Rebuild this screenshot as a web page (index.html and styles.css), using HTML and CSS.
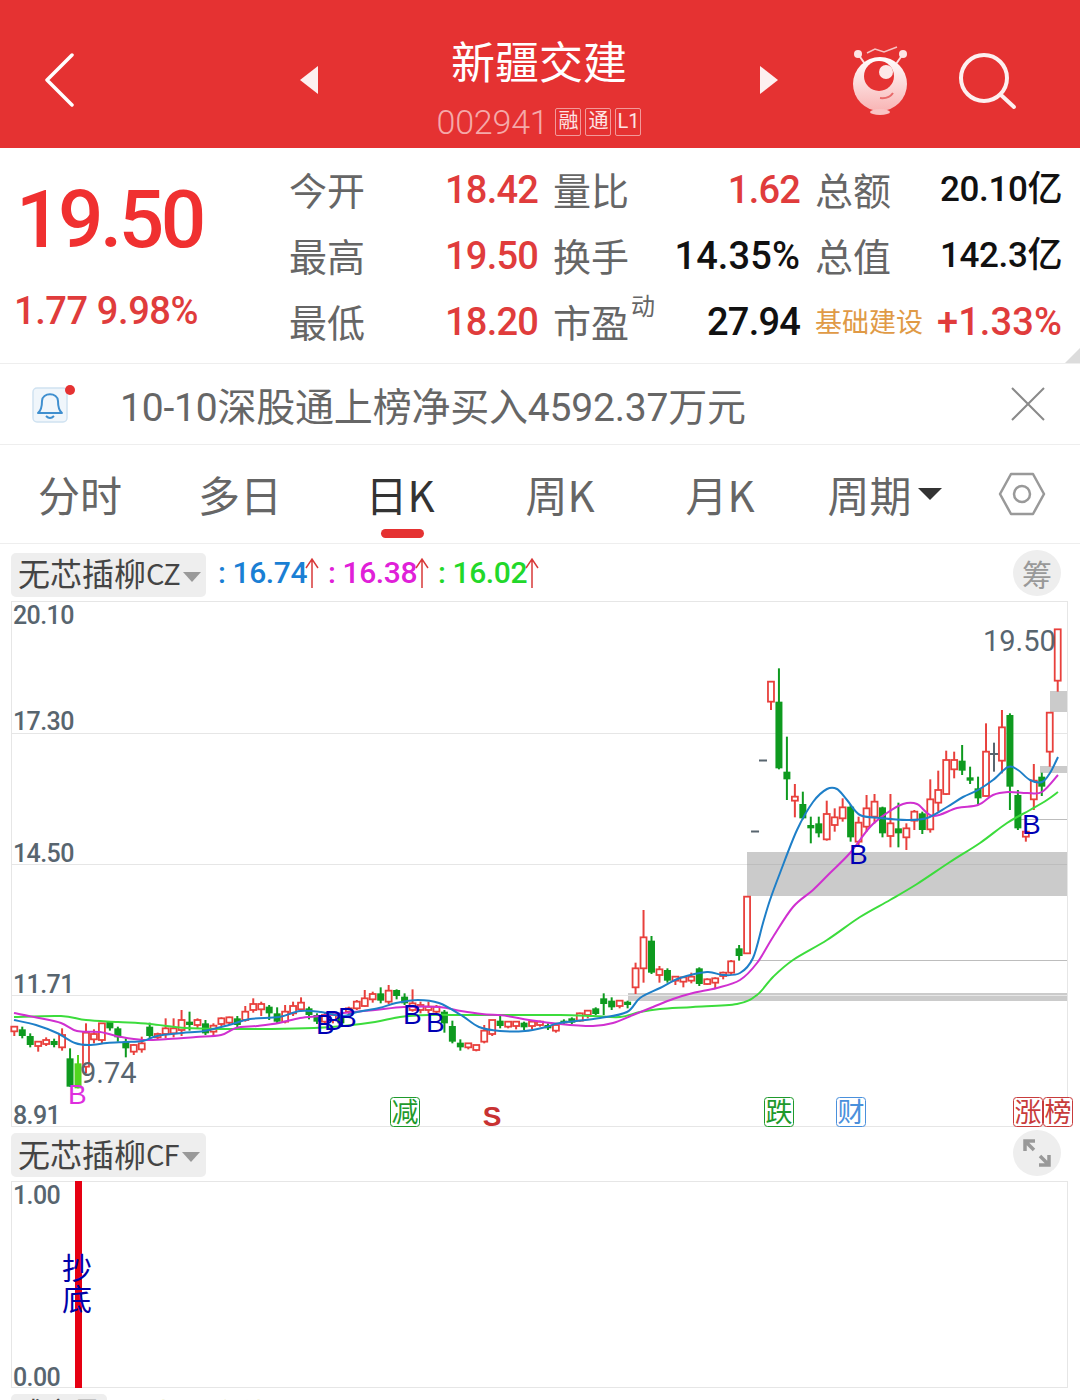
FILE: index.html
```html
<!DOCTYPE html>
<html lang="zh-CN">

<head>
    <meta charset="UTF-8">
    <meta name="viewport" content="width=device-width, initial-scale=1.0">
    <title>新疆交建 002941</title>
    <link rel="stylesheet" href="styles.css">
</head>

<body>

    <header class="nav">
        <svg class="nav-back" width="30" height="54" viewBox="0 0 30 54">
            <path d="M28 2 L3 27 L28 52" fill="none" stroke="#fff" stroke-width="3.5" stroke-linecap="round" stroke-linejoin="round" />
        </svg>
        <span class="nav-arrow nav-arrow-left"></span>
        <div class="nav-title">
            <div class="stock-name">新疆交建</div>
            <div class="stock-code">
                <span class="code-num">002941</span>
                <span class="code-tag">融</span>
                <span class="code-tag">通</span>
                <span class="code-tag">L1</span>
            </div>
        </div>
        <span class="nav-arrow nav-arrow-right"></span>
        <svg class="nav-robot" width="60" height="70" viewBox="849 45 60 70">
            <defs>
                <linearGradient id="robotBody" x1="0" y1="0" x2="0" y2="1">
                    <stop offset="0" stop-color="#fff" />
                    <stop offset="1" stop-color="#f8b4b4" />
                </linearGradient>
            </defs>
            <path d="M866 53 L874 49 L883 52 L896 47" fill="none" stroke="#f7c4c4" stroke-width="1.5" />
            <path d="M857 54 L864 64 M902 54 L895 64" stroke="#fbdcdc" stroke-width="2" />
            <circle cx="857" cy="54" r="4" fill="#fde4e4" />
            <circle cx="902" cy="54" r="4" fill="#fde4e4" />
            <circle cx="879" cy="84" r="27" fill="url(#robotBody)" />
            <circle cx="878" cy="76" r="15" fill="#e53232" />
            <circle cx="885" cy="72" r="7" fill="#fde8e8" />
            <path d="M879 98 Q888 99 892 93" fill="none" stroke="#e86a6a" stroke-width="2" />
            <ellipse cx="879" cy="112" rx="10" ry="3" fill="#f9c4c4" />
        </svg>
        <svg class="nav-search" width="60" height="60" viewBox="956 50 60 60">
            <circle cx="983" cy="78" r="23" fill="none" stroke="#fdf0f0" stroke-width="4" />
            <path d="M1000 95 L1013 107" stroke="#fdf0f0" stroke-width="4" stroke-linecap="round" />
        </svg>
    </header>

    <section class="quote">
        <div class="quote-main">
            <div class="price">19.50</div>
            <div class="change">1.77 9.98%</div>
        </div>
        <div class="quote-grid">
            <span class="q-label">今开</span><span class="q-val red">18.42</span>
            <span class="q-label q-gap">量比</span><span class="q-val red">1.62</span>
            <span class="q-label q-gap">总额</span><span class="q-val q-val-unit">20.10亿</span>

            <span class="q-label">最高</span><span class="q-val red">19.50</span>
            <span class="q-label q-gap">换手</span><span class="q-val q-val-pct">14.35%</span>
            <span class="q-label q-gap">总值</span><span class="q-val q-val-unit">142.3亿</span>

            <span class="q-label">最低</span><span class="q-val red">18.20</span>
            <span class="q-label q-gap">市盈<sup class="q-sup">动</sup></span><span class="q-val">27.94</span>
            <span class="q-label q-gap q-sector">基础建设</span><span class="q-val q-val-pct red">+1.33%</span>
        </div>
        <span class="quote-corner"></span>
    </section>

    <section class="notice">
        <svg class="notice-bell" width="46" height="44" viewBox="30 380 46 44">
            <rect x="33" y="386" width="34" height="34" rx="4" fill="#f0f6fb" stroke="#cfe2f1" stroke-width="1.5" />
            <path d="M38 411 C42 408 42 403 42 399 C42 390 58 390 58 399 C58 403 58 408 62 411 Z" fill="none" stroke="#3f8fcf" stroke-width="2" stroke-linejoin="round" />
            <path d="M46 414 Q50 418 54 414" fill="none" stroke="#3f8fcf" stroke-width="2" />
            <circle cx="70" cy="388" r="5" fill="#e53232" />
        </svg>
        <span class="notice-text">10-10深股通上榜净买入4592.37万元</span>
        <svg class="notice-close" width="36" height="36" viewBox="0 0 36 36">
            <path d="M2 2 L34 34 M34 2 L2 34" stroke="#8a8a8a" stroke-width="2" />
        </svg>
    </section>

    <nav class="tabs">
        <span class="tab">分时</span>
        <span class="tab">多日</span>
        <span class="tab tab-active">日K</span>
        <span class="tab">周K</span>
        <span class="tab">月K</span>
        <span class="tab tab-period">周期<i class="tab-caret"></i></span>
        <svg class="tab-gear" width="48" height="46" viewBox="0 0 48 46">
            <path d="M13 3 H35 L46 23 L35 43 H13 L2 23 Z" fill="none" stroke="#999" stroke-width="2.5" stroke-linejoin="round" />
            <circle cx="24" cy="23" r="8" fill="none" stroke="#999" stroke-width="2.5" />
        </svg>
    </nav>

    <div class="indicator-row">
        <div class="pill">无芯插柳<span class="pill-latin">CZ</span><i class="pill-caret"></i></div>
        <div class="ma-values">
            <span class="ma ma-blue">: 16.74</span>
            <svg class="ma-arrow" width="14" height="32" viewBox="0 0 14 32"><path d="M7 31 V2 M1 11 L7 2 L13 11" fill="none" stroke="#d83a3a" stroke-width="1.5" /></svg>
            <span class="ma ma-pink">: 16.38</span>
            <svg class="ma-arrow" width="14" height="32" viewBox="0 0 14 32"><path d="M7 31 V2 M1 11 L7 2 L13 11" fill="none" stroke="#d83a3a" stroke-width="1.5" /></svg>
            <span class="ma ma-green">: 16.02</span>
            <svg class="ma-arrow" width="14" height="32" viewBox="0 0 14 32"><path d="M7 31 V2 M1 11 L7 2 L13 11" fill="none" stroke="#d83a3a" stroke-width="1.5" /></svg>
        </div>
        <span class="round-btn round-text">筹</span>
    </div>

    <svg class="chart" width="1080" height="527" viewBox="0 601 1080 527">
        <rect class="zone" x="747" y="852" width="320" height="44" />
        <rect class="zone" x="1050" y="691" width="17" height="21" />
        <rect class="zone" x="1040" y="766" width="27" height="7" />
        <rect class="zone" x="628" y="993" width="439" height="8" />
        <path class="grid" d="M11 733.5 H1067 M11 864.5 H1067 M11 995.5 H1067" />
        <path class="support" d="M750 960.5 H1067 M1020 819.5 H1067 M747 864.5 H1067" />
        <rect class="frame" x="11.5" y="601.5" width="1056" height="525" />

        <g id="candles"></g>
        <g id="maLines"></g>

        <text class="axis" x="13" y="624">20.10</text>
        <text class="axis" x="13" y="730">17.30</text>
        <text class="axis" x="13" y="862">14.50</text>
        <text class="axis" x="13" y="993">11.71</text>
        <text class="axis" x="13" y="1124">8.91</text>

        <text class="peak" x="983" y="651">19.50</text>
        <text class="peak" x="80" y="1083">9.74</text>

        <text class="buy" x="316" y="1034">B</text>
        <text class="buy" x="324" y="1030">B</text>
        <text class="buy" x="338" y="1027">B</text>
        <text class="buy" x="403" y="1024">B</text>
        <text class="buy" x="426" y="1032">B</text>
        <text class="buy" x="849" y="864">B</text>
        <text class="buy" x="1022" y="834">B</text>
        <text class="buy buy-pink" x="68" y="1104">B</text>

        <rect class="tag tag-green" x="390.5" y="1097.5" width="29" height="29" rx="3" />
        <text class="tag-text tag-text-green" x="405" y="1122">减</text>
        <text class="sell" x="492" y="1126">S</text>
        <rect class="tag tag-green" x="764.5" y="1097.5" width="29" height="29" rx="3" />
        <text class="tag-text tag-text-green" x="779" y="1122">跌</text>
        <rect class="tag tag-blue" x="836.5" y="1097.5" width="29" height="29" rx="3" />
        <text class="tag-text tag-text-blue" x="851" y="1122">财</text>
        <rect class="tag tag-red" x="1013.5" y="1097.5" width="29" height="29" rx="3" />
        <text class="tag-text tag-text-red" x="1028" y="1122">涨</text>
        <rect class="tag tag-red" x="1043.5" y="1097.5" width="29" height="29" rx="3" />
        <text class="tag-text tag-text-red" x="1058" y="1122">榜</text>
    </svg>

    <div class="indicator-row indicator-row-sub">
        <div class="pill">无芯插柳<span class="pill-latin">CF</span><i class="pill-caret"></i></div>
        <span class="round-btn round-btn-up">
            <svg width="30" height="30" viewBox="0 0 30 30">
                <path d="M3 13 V3 H13 M3 3 L12 12 M27 17 V27 H17 M27 27 L18 18" fill="none" stroke="#999" stroke-width="3.5" />
            </svg>
        </span>
    </div>

    <svg class="chart-sub" width="1080" height="208" viewBox="0 1181 1080 208">
        <rect class="frame" x="11.5" y="1181.5" width="1056" height="206" />
        <rect x="75" y="1181" width="7" height="207" fill="#e60012" />
        <text class="bottom-tag" x="77" y="1279">抄</text>
        <text class="bottom-tag" x="77" y="1310">底</text>
        <text class="axis" x="13" y="1204">1.00</text>
        <text class="axis" x="13" y="1386">0.00</text>
    </svg>

    <div class="bottom-row">
        <div class="pill pill-small">成交量</div>
        <span class="bottom-note">主力资金线</span>
    </div>

    <script src="chart.js"></script>
</body>

</html>
```

FILE: styles.css
```css
* {
    box-sizing: border-box;
}

html,
body {
    height: 1400px;
    overflow: hidden;
}

body {
    margin: 0;
    background-color: #fff;
    font-family: Roboto, "Noto Sans CJK SC", sans-serif;
    color: #666;
}

svg {
    display: block;
}

/* top bar */
.nav {
    display: flex;
    align-items: center;
    height: 148px;
    padding-left: 44px;
    background-color: #e53232;
    color: #fff;
}

.nav-back {
    margin-top: 12px;
}

.nav-arrow {
    width: 0;
    height: 0;
    margin-top: 12px;
    border-top: 14px solid transparent;
    border-bottom: 14px solid transparent;
}

.nav-arrow-left {
    margin-left: 226px;
    border-right: 18px solid #fdf0f0;
}

.nav-arrow-right {
    border-left: 18px solid #fdf0f0;
}

.nav-title {
    width: 442px;
    text-align: center;
}

.stock-name {
    margin-top: 19px;
    font-size: 44px;
    line-height: 60px;
    font-family: "Noto Sans CJK SC", sans-serif;
}

.stock-code {
    display: flex;
    align-items: center;
    justify-content: center;
    gap: 4px;
    margin-top: 17px;
    height: 30px;
}

.code-num {
    margin-right: 3px;
    font-size: 34px;
    font-weight: 300;
    letter-spacing: -0.2px;
    color: #f5a9a9;
}

.code-tag {
    display: block;
    width: 26px;
    height: 28px;
    border: 1px solid #f29a9a;
    border-radius: 2px;
    font-size: 20px;
    line-height: 25px;
    text-align: center;
    color: #fde4e4;
}

.nav-robot {
    margin-left: 72px;
    margin-top: 12px;
}

.nav-search {
    margin-left: 47px;
    margin-top: 12px;
}

/* quote block */
.quote {
    position: relative;
    display: flex;
    height: 216px;
    border-bottom: 1px solid #eee;
}

.quote-main {
    width: 289px;
    padding-left: 14px;
}

.price {
    margin-top: 22px;
    padding-left: 2px;
    font-size: 80px;
    line-height: 100px;
    font-weight: 500;
    letter-spacing: -3.5px;
    color: #f03030;
}

.change {
    margin-top: 18px;
    font-size: 38px;
    line-height: 46px;
    font-weight: 500;
    letter-spacing: -0.4px;
    color: #e03c3c;
}

.quote-grid {
    display: grid;
    grid-template-columns: 76px 173px 91px 171px 92px 170px;
    grid-auto-rows: 66px;
    align-items: center;
    padding-top: 8px;
}

.q-label {
    font-family: "Noto Sans CJK SC", sans-serif;
    font-size: 38px;
    line-height: 44px;
    white-space: nowrap;
    color: #666;
}

.q-gap {
    padding-left: 15px;
}

.q-sup {
    position: relative;
    top: -22px;
    margin-left: 2px;
    font-size: 24px;
    line-height: 0;
    vertical-align: baseline;
}

.q-sector {
    font-size: 27px;
    color: #e09a46;
}

.q-val {
    padding-top: 1px;
    font-size: 38px;
    line-height: 44px;
    font-weight: 500;
    letter-spacing: -0.8px;
    text-align: right;
    white-space: nowrap;
    color: #111;
}

.q-val-pct {
    letter-spacing: 0.1px;
}

.q-val-unit {
    font-size: 35px;
    letter-spacing: -0.4px;
}

.q-val.red {
    color: #e03c3c;
}

.quote-corner {
    position: absolute;
    right: 0;
    bottom: 0;
    border-left: 15px solid transparent;
    border-bottom: 15px solid #dcdcdc;
}

/* notice */
.notice {
    display: flex;
    align-items: center;
    height: 81px;
    padding-left: 30px;
    border-bottom: 1px solid #eee;
}

.notice-text {
    margin-left: 44px;
    width: 891px;
    font-size: 39px;
    letter-spacing: -0.2px;
    white-space: nowrap;
    color: #666;
}

.notice-close {
    margin-left: -1px;
}

/* period tabs */
.tabs {
    display: grid;
    grid-template-columns: repeat(6, 160px) 120px;
    align-items: center;
    height: 99px;
    border-bottom: 1px solid #eee;
}

.tab {
    position: relative;
    font-family: "Noto Sans CJK SC", sans-serif;
    font-size: 42px;
    line-height: 60px;
    text-align: center;
    color: #666;
}

.tab-active {
    color: #333;
}

.tab-active::after {
    content: "";
    position: absolute;
    left: 61px;
    bottom: -14px;
    width: 43px;
    height: 9px;
    border-radius: 5px;
    background-color: #e53232;
}

.tab-period {
    padding-left: 9px;
}

.tab-caret {
    display: inline-block;
    margin-left: 6px;
    vertical-align: 12px;
    border-left: 12px solid transparent;
    border-right: 12px solid transparent;
    border-top: 12px solid #333;
}

.tab-gear {
    margin-left: 38px;
}

/* indicator rows */
.indicator-row {
    display: flex;
    align-items: center;
    height: 57px;
    padding: 4px 19px 0 11px;
}

.indicator-row-sub {
    height: 53px;
    align-items: flex-start;
    padding-top: 5px;
}

.pill {
    display: flex;
    align-items: center;
    width: 195px;
    height: 44px;
    padding-left: 7px;
    padding-bottom: 5px;
    border-radius: 5px;
    background-color: #eee;
    font-family: "Noto Sans CJK SC", sans-serif;
    font-size: 32px;
    color: #444;
    white-space: nowrap;
}

.pill-latin {
    font-size: 29px;
    letter-spacing: -1px;
}

.pill-caret {
    margin-left: 3px;
    margin-top: 9px;
    border-left: 9px solid transparent;
    border-right: 9px solid transparent;
    border-top: 10px solid #999;
}

.ma-values {
    display: flex;
    align-items: center;
    flex: 1;
    margin-left: 12px;
    margin-top: -4px;
}

.ma {
    width: 87px;
    font-size: 30px;
    font-weight: 500;
    letter-spacing: -0.4px;
    white-space: nowrap;
}

.ma-blue {
    color: #1a7fd4;
}

.ma-pink {
    color: #e020d8;
}

.ma-green {
    color: #22d82a;
}

.ma-arrow {
    margin-right: 9px;
}

.round-btn {
    display: flex;
    align-items: center;
    justify-content: center;
    flex: none;
    width: 48px;
    height: 46px;
    border-radius: 50%;
    background-color: #eee;
}

.round-btn-up {
    margin-top: -3px;
}

.indicator-row-sub .pill {
    margin-right: auto;
}

.round-text {
    margin-top: -4px;
    font-family: "Noto Sans CJK SC", sans-serif;
    font-size: 30px;
    color: #999;
}

/* charts */
.chart,
.chart-sub {
    overflow: visible;
}

.frame {
    fill: none;
    stroke: #e6e6e6;
}

.zone {
    fill: #cbcbcb;
}

.grid {
    fill: none;
    stroke: #e6e6e6;
}

.support {
    fill: none;
    stroke: #bdbdbd;
}

.ma-line {
    fill: none;
    stroke-width: 2;
    stroke-linejoin: round;
}

.axis {
    font-size: 25px;
    font-weight: 500;
    letter-spacing: -0.6px;
    fill: #58656f;
}

.peak {
    font-size: 29px;
    fill: #58656f;
}

.buy {
    font-family: "Liberation Sans", sans-serif;
    font-size: 28px;
    fill: #0000b4;
}

.buy-pink {
    fill: #de2ede;
}

.sell {
    font-family: "Liberation Sans", sans-serif;
    font-size: 28px;
    font-weight: 700;
    text-anchor: middle;
    fill: #c83232;
}

.tag {
    fill: #fff;
}

.tag-green {
    stroke: #1f9a2c;
}

.tag-blue {
    stroke: #4a90dc;
}

.tag-red {
    stroke: #c83c3c;
}

.tag-text {
    font-family: "Noto Sans CJK SC", sans-serif;
    font-size: 27px;
    text-anchor: middle;
}

.tag-text-green {
    fill: #1f9a2c;
}

.tag-text-blue {
    fill: #4a90dc;
}

.tag-text-red {
    fill: #c83c3c;
}

.bottom-tag {
    font-family: "Noto Sans CJK SC", sans-serif;
    font-size: 30px;
    text-anchor: middle;
    fill: #0000a8;
}

.bottom-row {
    display: flex;
    align-items: flex-start;
    gap: 13px;
    margin-top: 5px;
    padding-left: 11px;
}

.pill-small {
    width: 96px;
    padding-left: 6px;
    padding-bottom: 0;
    align-items: flex-start;
    font-size: 28px;
    line-height: 34px;
}

.bottom-note {
    font-family: "Noto Sans CJK SC", sans-serif;
    font-size: 30px;
    line-height: 36px;
    color: #e6da8e;
}
```

FILE: chart.js
```javascript
// candle rows are: type, wick top, body top, body bottom, wick bottom
// r = up (hollow), g = down, l = lime, k = doji
const GROUPS = [
    {
        start: 0, base: 960, rows: [
            'r 200 200 214 228', 'g 200 208 228 235', 'g 220 228 255 262', 'r 245 245 258 275',
            'r 232 240 252 258', 'g 236 243 255 262', 'r 205 225 262 272', 'g 265 295 380 380',
            'l 285 310 385 385', 'r 190 218 320 340', 'r 208 222 238 250', 'r 190 190 240 250',
            'g 183 185 205 212', 'g 200 205 232 245', 'g 235 245 265 292', 'r 252 255 275 285',
            'r 230 250 268 278', 'g 188 200 228 235', 'r 218 222 232 238', 'r 175 205 222 235',
            'r 175 205 220 232', 'r 150 180 210 228', 'g 155 185 195 212', 'r 175 180 195 205',
            'g 180 190 220 225', 'r 190 197 215 228', 'r 172 175 192 198', 'r 170 172 188 195',
            'g 168 175 195 205', 'r 138 155 180 185', 'r 115 132 150 158', 'r 125 132 148 168',
            'g 135 140 160 180', 'g 142 160 185 192', 'r 135 155 185 190', 'r 125 138 160 168',
            'r 112 128 148 155', 'g 140 145 165 178', 'g 160 165 185 192', 'r 158 165 185 195',
            'r 155 165 180 190', 'g 160 170 190 200', 'r 140 145 155 165', 'r 120 125 145 150',
            'r 90 115 138 140', 'r 95 102 118 128', 'g 82 100 122 130', 'r 75 92 125 132',
            'g 88 90 108 118', 'g 100 110 130 135', 'r 88 130 150 155', 'r 125 135 150 160',
            'r 125 140 150 160', 'r 135 140 155 165', 'g 150 155 190 218', 'g 182 198 245 250',
            'g 238 248 262 272', 'r 250 250 262 268', 'r 255 255 270 274', 'r 195 212 245 250',
            'r 180 180 222 228', 'g 168 182 198 205', 'r 185 185 200 205', 'r 185 185 198 208',
            'g 185 188 202 210', 'r 182 185 198 208', 'r 182 185 195 200', 'g 190 195 205 210',
            'r 195 195 212 218'
        ]
    },
    {
        start: 69, base: 880, rows: [
            'g 418 422 430 434', 'g 412 415 428 432', 'r 398 400 422 425', 'r 392 392 405 415',
            'g 382 385 402 405', 'g 340 355 372 405', 'g 352 362 382 390', 'r 362 362 378 385',
            'g 362 365 375 385', 'r 248 265 322 342', 'r 90 172 265 308', 'g 168 182 278 282',
            'r 258 268 285 308', 'g 265 270 302 308', 'r 290 290 302 315', 'r 290 292 305 322',
            'r 278 290 302 310', 'g 262 265 312 318', 'r 295 298 312 315', 'r 292 295 308 325',
            'r 275 278 288 298', 'r 240 244 278 285', 'g 195 205 228 242', 'r 48 50 220 222'
        ]
    },
    {
        start: 95, base: 610, rows: [
            'r 215 215 275 300', 'g 175 275 475 478', 'g 380 485 508 570', 'r 522 560 572 622',
            'g 545 582 625 628', 'g 620 645 655 700', 'g 620 640 670 682', 'r 572 612 688 692',
            'r 595 622 645 665', 'r 565 592 625 635', 'g 585 590 682 695', 'r 620 638 695 705',
            'r 555 595 650 665', 'r 552 575 620 640', 'g 590 592 670 682', 'r 552 640 678 712',
            'g 578 655 670 712', 'r 640 655 682 720', 'r 600 605 632 660', 'g 605 610 660 672',
            'r 508 568 658 668', 'r 482 540 578 605', 'r 422 450 552 555', 'r 425 450 478 505',
            'g 405 452 482 495', 'g 470 502 512 522', 'g 500 535 565 582', 'r 340 425 558 560',
            'k 398 432 432 485', 'r 300 352 452 490', 'g 310 315 530 600', 'g 540 555 655 660',
            'r 665 665 680 695', 'r 462 512 568 600', 'g 488 500 530 558', 'r 308 308 425 470',
            'r 58 58 212 245'
        ]
    }
];

const COLORS = { r: '#e8403c', g: '#0e9a1f', l: '#52d61e', k: '#58656f' };

const MA_LINES = [
    {
        color: '#3cdc3c', points: [
            14, 1017, 61, 1016, 86, 1020, 118, 1022, 150, 1024, 186, 1028, 229, 1029, 271, 1029, 314, 1028,
            343, 1026, 375, 1022, 400, 1017, 429, 1015, 464, 1015, 500, 1015, 560, 1015, 593, 1016, 620, 1017,
            640, 1012, 660, 1009, 693, 1007, 737, 1004, 757, 995, 773, 977, 793, 960, 827, 940, 860, 917,
            890, 900, 917, 884, 950, 862, 980, 843, 1007, 823, 1030, 810, 1047, 800, 1058, 792
        ]
    },
    {
        color: '#d030d0', points: [
            14, 1013, 39, 1018, 61, 1023, 77, 1031, 100, 1032, 121, 1037, 143, 1040, 168, 1039, 196, 1037,
            221, 1035, 236, 1028, 257, 1026, 279, 1023, 300, 1018, 321, 1016, 343, 1013, 375, 1010, 404, 1007,
            439, 1007, 461, 1011, 482, 1014, 507, 1016, 529, 1020, 560, 1024, 593, 1026, 613, 1023, 633, 1015,
            653, 1007, 673, 999, 693, 993, 717, 988, 740, 980, 757, 963, 773, 937, 793, 907, 813, 890, 830, 873,
            850, 853, 870, 827, 887, 813, 903, 804, 917, 804, 933, 816, 957, 808, 978, 805, 993, 795, 1008, 792,
            1027, 793, 1042, 792, 1058, 775
        ]
    },
    {
        color: '#1e7fc8', points: [
            14, 1020, 36, 1025, 57, 1033, 75, 1043, 89, 1045, 107, 1043, 125, 1042, 143, 1041, 157, 1036,
            182, 1033, 204, 1031, 229, 1025, 250, 1019, 279, 1017, 300, 1011, 321, 1012, 343, 1016, 357, 1012,
            379, 1008, 396, 1003, 418, 1000, 439, 1003, 461, 1015, 479, 1027, 500, 1031, 525, 1031, 546, 1027,
            560, 1023, 600, 1018, 627, 1012, 640, 998, 660, 988, 680, 978, 707, 972, 723, 975, 740, 973,
            753, 958, 763, 923, 770, 900, 780, 873, 797, 830, 813, 802, 827, 789, 837, 789, 847, 800, 860, 815,
            880, 818, 907, 820, 927, 818, 947, 807, 963, 797, 978, 790, 993, 780, 1008, 767, 1018, 770,
            1030, 780, 1042, 782, 1050, 773, 1058, 757
        ]
    }
];

function candleX(i) {
    return 14.3 + 7.965 * i;
}

function candleSvg(x, base, row) {
    const parts = row.split(' ');
    const type = parts[0];
    const [wickTop, bodyTop, bodyBot, wickBot] = parts.slice(1).map(v => base + v / 3);
    const color = COLORS[type];
    let out = `<path d="M${x} ${wickTop}V${wickBot}" stroke="${color}" stroke-width="2"/>`;
    if (type === 'r') {
        out += `<rect x="${x - 3}" y="${bodyTop}" width="6" height="${bodyBot - bodyTop}" fill="#fff" stroke="${color}" stroke-width="1.8"/>`;
    } else if (type === 'k') {
        out += `<path d="M${x - 4} ${bodyTop}H${x + 4}" stroke="${color}" stroke-width="2"/>`;
    } else {
        out += `<rect x="${x - 3.5}" y="${bodyTop}" width="7" height="${bodyBot - bodyTop}" fill="${color}"/>`;
    }
    return out;
}

// smooth curve through the points, catmull-rom turned into beziers
function smoothPath(flat) {
    const pts = [];
    for (let i = 0; i < flat.length; i += 2) {
        pts.push([flat[i], flat[i + 1]]);
    }
    let d = `M${pts[0][0]} ${pts[0][1]}`;
    for (let i = 0; i < pts.length - 1; i++) {
        const p0 = pts[i - 1] || pts[i];
        const p1 = pts[i];
        const p2 = pts[i + 1];
        const p3 = pts[i + 2] || p2;
        const c1x = p1[0] + (p2[0] - p0[0]) / 6;
        const c1y = p1[1] + (p2[1] - p0[1]) / 6;
        const c2x = p2[0] - (p3[0] - p1[0]) / 6;
        const c2y = p2[1] - (p3[1] - p1[1]) / 6;
        d += `C${c1x} ${c1y} ${c2x} ${c2y} ${p2[0]} ${p2[1]}`;
    }
    return d;
}

let candleMarkup = '';
GROUPS.forEach(group => {
    group.rows.forEach((row, n) => {
        candleMarkup += candleSvg(candleX(group.start + n), group.base, row);
    });
});

// the two limit-up days open and close at one price, only a dash is left
candleMarkup += `<path d="M${candleX(93) - 4} 831.5h8M${candleX(94) - 4} 760.5h8" stroke="#58656f" stroke-width="2"/>`;
document.getElementById('candles').innerHTML = candleMarkup;

document.getElementById('maLines').innerHTML = MA_LINES
    .map(line => `<path class="ma-line" stroke="${line.color}" d="${smoothPath(line.points)}"/>`)
    .join('');
```
